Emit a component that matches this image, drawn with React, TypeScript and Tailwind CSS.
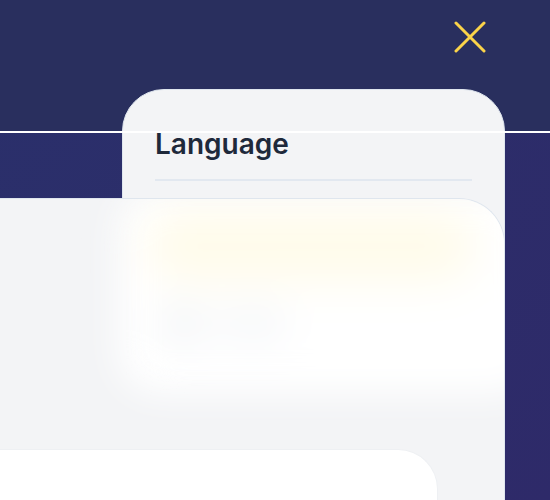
export default function App() {
  return (
    <div className="relative h-[500px] w-[550px] overflow-hidden bg-gradient-to-br from-[#2a306b] to-[#2e2a69] font-['Inter',sans-serif]">
      <header className="flex h-[132px] items-start justify-end bg-[#292f5e] pr-[64px] pt-[21px]">
        <button className="h-[32px] w-[32px]" aria-label="Close">
          <svg viewBox="0 0 32 32" className="h-[32px] w-[32px]">
            <path d="M2 2 L30 30 M30 2 L2 30" stroke="#fbd449" strokeWidth="3" strokeLinecap="round" />
          </svg>
        </button>
      </header>

      {/* language sheet */}
      <div className="absolute left-[122px] top-[89px] h-[440px] w-[383px] rounded-t-[42px] border border-[#dfe6ee] bg-[#f3f4f6] px-[32px] pt-[35px]">
        <h2 className="text-[28px] font-semibold leading-[38px] text-[#1e293b]">Language</h2>
        <div className="mt-[16px] h-[2px] bg-[#e2e8f0]" />
      </div>

      <div className="absolute inset-x-0 top-[131px] h-[2px] bg-white" />

      {/* loading card */}
      <div className="absolute left-0 top-[198px] flex h-[320px] w-[505px] flex-col overflow-hidden rounded-tr-[46px] border-r border-t border-[#dfe6ee] bg-[#f3f4f6]">
        <div className="relative h-[250px]">
          <div className="absolute left-[118px] top-[-10px] h-[205px] w-[420px] rounded-[40px] bg-white blur-[18px]">
            <div className="absolute left-[28px] top-[22px] h-[70px] w-[330px] rounded-full bg-[#fffbea] blur-[14px]" />
            <div className="absolute left-[40px] top-[110px] h-[50px] w-[50px] rounded-full bg-[#f5f6f8] blur-[8px]" />
            <div className="absolute left-[100px] top-[115px] h-[40px] w-[70px] rounded-full bg-[#f7f8fa] blur-[8px]" />
          </div>
        </div>
        <div className="w-[438px] flex-1 rounded-tr-[40px] border-r border-t border-[#eef0f3] bg-white" />
      </div>
    </div>
  );
}
